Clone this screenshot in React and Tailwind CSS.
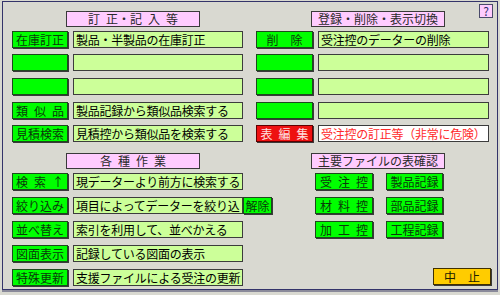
import React from "react";

const font = { fontFamily: '"Noto Sans CJK JP", "Noto Sans", sans-serif' };

function Btn({ label, w = "w-[56px]", color = "green", className = "" }) {
  const base =
    color === "red"
      ? "bg-[#ee1111] text-[#ffe0e0] border-[#600000]"
      : color === "yellow"
      ? "bg-[#ffcc00] text-[#202000] border-[#403000]"
      : "bg-[#00ff00] text-[#0a3a0a] border-[#1d4a1d]";
  return (
    <div
      className={`${w} h-[17px] shrink-0 border ${base} shadow-[1px_1px_0_#3a3a3a] flex items-center justify-center text-[12px] leading-none whitespace-pre ${className}`}
    >
      {label}
    </div>
  );
}

function Field({ text = "", w = "w-[170px]", red = false }) {
  return (
    <div
      className={`${w} h-[17px] shrink-0 border border-[#3c3c3c] ${
        red ? "bg-white text-[#ff2a2a]" : "bg-[#ccff99] text-black"
      } flex items-center pl-[2px] text-[12px] tracking-[-0.25px] leading-none whitespace-nowrap overflow-hidden`}
    >
      {text}
    </div>
  );
}

function Header({ text, ml }) {
  return (
    <div
      className={`${ml} w-[134px] h-[16px] border border-[#3a3a3a] bg-[#ffccff] text-[#2a2a2a] flex items-center justify-center text-[12px] leading-none whitespace-pre`}
    >
      {text}
    </div>
  );
}

export default function App() {
  const E = "\u2002";
  const M = "\u2003";
  const leftTop = [
    ["在庫訂正", "製品・半製品の在庫訂正"],
    ["", ""],
    ["", ""],
    [`類${E}似${E}品`, "製品記録から類似品検索する"],
    ["見積検索", "見積控から類似品を検索する"],
  ];
  const rightTop = [
    [`削${M}除`, "受注控のデーターの削除"],
    ["", ""],
    ["", ""],
    ["", ""],
  ];
  const gaps = ["", "mt-[6px]", "mt-[7px]", "mt-[7px]", "mt-[6px]"];
  const leftBottom = [
    [`検${E}索${E}↑`, "現データーより前方に検索する"],
    ["絞り込み", "項目によってデーターを絞り込"],
    ["並べ替え", "索引を利用して、並べかえる"],
    ["図面表示", "記録している図面の表示"],
    ["特殊更新", "支援ファイルによる受注の更新"],
  ];
  const rightBottom = [
    [`受${E}注${E}控`, "製品記録"],
    [`材${E}料${E}控`, "部品記録"],
    [`加${E}工${E}控`, "工程記録"],
  ];

  return (
    <div className="w-[500px] h-[295px] bg-[#d9d9d1] pt-[1px] pl-[2px]" style={font}>
      <div className="relative w-[496px] h-[289px] border border-[#34346a] shadow-[0_2px_0_#8a8a9a] pt-[9px] pl-[9px]">
        <div className="absolute top-[2px] right-[4px] w-[14px] h-[14px] bg-[#ffccff] border border-[#4a4a6a] text-[#30306a] text-[12px] leading-none flex items-center justify-center">
          ?
        </div>

        {/* top row */}
        <div className="flex">
          <div className="w-[232px] shrink-0 flex flex-col">
            <Header text={`訂${E}正・記${E}入${E}等`} ml="ml-[54px]" />
            <div className="mt-[4px] flex flex-col">
              {leftTop.map(([b, t], i) => (
                <div key={i} className={`flex ${gaps[i]}`}>
                  <Btn label={b} />
                  <div className="ml-[5px]">
                    <Field text={t} />
                  </div>
                </div>
              ))}
            </div>
          </div>
          <div className="ml-[12px] w-[234px] shrink-0 flex flex-col">
            <Header text="登録・削除・表示切換" ml="ml-[55px]" />
            <div className="mt-[4px] flex flex-col">
              {rightTop.map(([b, t], i) => (
                <div key={i} className={`flex ${gaps[i]}`}>
                  <Btn label={b} w="w-[57px]" />
                  <div className="ml-[5px]">
                    <Field text={t} w="w-[171px]" />
                  </div>
                </div>
              ))}
              <div className={`flex ${gaps[4]}`}>
                <Btn label={`表${E}編${E}集`} w="w-[57px]" color="red" />
                <div className="ml-[5px]">
                  <Field text="受注控の訂正等（非常に危険）" w="w-[171px]" red />
                </div>
              </div>
            </div>
          </div>
        </div>

        {/* bottom row */}
        <div className="flex mt-[11px]">
          <div className="w-[232px] shrink-0 flex flex-col">
            <Header text={`各${E}種${E}作${E}業`} ml="ml-[54px]" />
            <div className="mt-[4px] flex flex-col gap-[7px]">
              {leftBottom.map(([b, t], i) => (
                <div key={i} className="flex">
                  <Btn label={b} />
                  <div className="ml-[5px] flex">
                    <Field text={t} />
                    {i === 1 && <Btn label="解除" w="w-[29px]" />}
                  </div>
                </div>
              ))}
            </div>
          </div>
          <div className="ml-[12px] w-[234px] shrink-0 flex flex-col">
            <Header text="主要ファイルの表確認" ml="ml-[55px]" />
            <div className="mt-[4px] flex flex-col gap-[7px]">
              {rightBottom.map(([a, b], i) => (
                <div key={i} className="flex">
                  <Btn label={a} w="w-[58px]" className="ml-[59px]" />
                  <Btn label={b} w="w-[57px]" className="ml-[13px]" />
                </div>
              ))}
            </div>
            <div className="mt-[30px] flex">
              <Btn label={`中${M}止`} w="w-[58px]" color="yellow" className="ml-[177px]" />
            </div>
          </div>
        </div>
      </div>
    </div>
  );
}
